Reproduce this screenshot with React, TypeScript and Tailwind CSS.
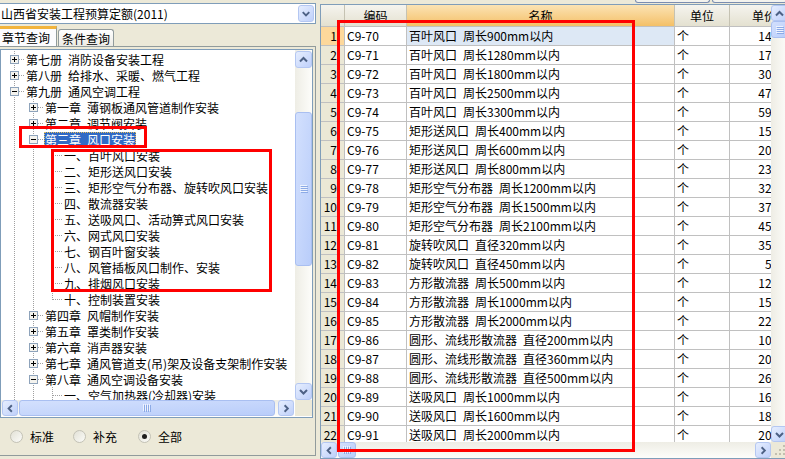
import React from "react";

type Dir = "up" | "down" | "left" | "right";

const arrowPaths: Record<Dir, string> = {
  up: "M4 9.5 L7.5 6 L11 9.5",
  down: "M4 6 L7.5 9.5 L11 6",
  left: "M9.5 4 L6 7.5 L9.5 11",
  right: "M6 4 L9.5 7.5 L6 11",
};

function ScrollBtn({ dir, className }: { dir: Dir; className: string }) {
  return (
    <div
      className={`${className} flex shrink-0 items-center justify-center rounded-[3px] border border-[#b4c7f2] bg-linear-to-br from-[#e6eefe] to-[#bfd0fa]`}
    >
      <svg width="15" height="15" viewBox="0 0 15 15">
        <path d={arrowPaths[dir]} fill="none" stroke="#4d6185" strokeWidth="2" />
      </svg>
    </div>
  );
}

function Thumb({ vertical, className }: { vertical?: boolean; className: string }) {
  return (
    <div
      className={`${className} flex shrink-0 items-center justify-center rounded-[3px] border border-[#a9bff1] bg-linear-to-br from-[#d3e0fd] to-[#b9cdfa]`}
    >
      {vertical ? (
        <svg width="8" height="8" viewBox="0 0 8 8">
          {[0, 2, 4, 6].map((y) => (
            <g key={y}>
              <line x1="0" y1={y + 0.5} x2="7" y2={y + 0.5} stroke="#eef3fe" />
              <line x1="1" y1={y + 1.5} x2="8" y2={y + 1.5} stroke="#8caae6" />
            </g>
          ))}
        </svg>
      ) : (
        <svg width="8" height="8" viewBox="0 0 8 8">
          {[0, 2, 4, 6].map((x) => (
            <g key={x}>
              <line x1={x + 0.5} y1="0" x2={x + 0.5} y2="7" stroke="#eef3fe" />
              <line x1={x + 1.5} y1="1" x2={x + 1.5} y2="8" stroke="#8caae6" />
            </g>
          ))}
        </svg>
      )}
    </div>
  );
}

type Cell = "pipe" | "tee" | "end";
type Node = { cells: Cell[]; box?: "plus" | "minus"; text: string; sel?: boolean };

function TreeCell({ kind, box }: { kind: Cell; box?: "plus" | "minus" }) {
  return (
    <svg width="19" height="16" viewBox="0 0 19 16" className="shrink-0">
      <line x1="9.5" y1="0" x2="9.5" y2={kind === "end" ? 9 : 16} stroke="#a0a0a0" strokeDasharray="1 1" />
      {kind !== "pipe" && <line x1="10" y1="8.5" x2="19" y2="8.5" stroke="#a0a0a0" strokeDasharray="1 1" />}
      {box && (
        <g>
          <rect x="5.5" y="4.5" width="8" height="8" fill="#f4f3ee" stroke="#8ea3bb" />
          <line x1="7" y1="8.5" x2="12" y2="8.5" stroke="#000" />
          {box === "plus" && <line x1="9.5" y1="6" x2="9.5" y2="11" stroke="#000" />}
        </g>
      )}
    </svg>
  );
}

function Label({ text }: { text: string }) {
  const parts = text.split(" ");
  return (
    <>
      {parts.map((p, i) => (
        <React.Fragment key={i}>
          {i > 0 && <span className="inline-block w-[6px]" />}
          {p}
        </React.Fragment>
      ))}
    </>
  );
}

const L0: Cell[] = ["tee"];
const L1: Cell[] = ["pipe", "tee"];
const L2: Cell[] = ["pipe", "pipe", "tee"];

const tree: Node[] = [
  { cells: L0, box: "plus", text: "第七册 消防设备安装工程" },
  { cells: L0, box: "plus", text: "第八册 给排水、采暖、燃气工程" },
  { cells: L0, box: "minus", text: "第九册 通风空调工程" },
  { cells: L1, box: "plus", text: "第一章 薄钢板通风管道制作安装" },
  { cells: L1, box: "plus", text: "第二章 调节阀安装" },
  { cells: L1, box: "minus", text: "第三章 风口安装", sel: true },
  { cells: L2, text: "一、百叶风口安装" },
  { cells: L2, text: "二、矩形送风口安装" },
  { cells: L2, text: "三、矩形空气分布器、旋转吹风口安装" },
  { cells: L2, text: "四、散流器安装" },
  { cells: L2, text: "五、送吸风口、活动箅式风口安装" },
  { cells: L2, text: "六、网式风口安装" },
  { cells: L2, text: "七、钢百叶窗安装" },
  { cells: L2, text: "八、风管插板风口制作、安装" },
  { cells: L2, text: "九、排烟风口安装" },
  { cells: ["pipe", "pipe", "end"], text: "十、控制装置安装" },
  { cells: L1, box: "plus", text: "第四章 风帽制作安装" },
  { cells: L1, box: "plus", text: "第五章 罩类制作安装" },
  { cells: L1, box: "plus", text: "第六章 消声器安装" },
  { cells: L1, box: "plus", text: "第七章 通风管道支(吊)架及设备支架制作安装" },
  { cells: L1, box: "minus", text: "第八章 通风空调设备安装" },
  { cells: L2, text: "一、空气加热器(冷却器)安装" },
];

const rows: [string, string, string][] = [
  ["C9-70", "百叶风口 周长900mm以内", "142.65"],
  ["C9-71", "百叶风口 周长1280mm以内", "176.30"],
  ["C9-72", "百叶风口 周长1800mm以内", "305.18"],
  ["C9-73", "百叶风口 周长2500mm以内", "471.92"],
  ["C9-74", "百叶风口 周长3300mm以内", "596.44"],
  ["C9-75", "矩形送风口 周长400mm以内", "154.27"],
  ["C9-76", "矩形送风口 周长600mm以内", "203.61"],
  ["C9-77", "矩形送风口 周长800mm以内", "236.85"],
  ["C9-78", "矩形空气分布器 周长1200mm以内", "325.47"],
  ["C9-79", "矩形空气分布器 周长1500mm以内", "378.06"],
  ["C9-80", "矩形空气分布器 周长2100mm以内", "452.73"],
  ["C9-81", "旋转吹风口 直径320mm以内", "356.12"],
  ["C9-82", "旋转吹风口 直径450mm以内", "58.49"],
  ["C9-83", "方形散流器 周长500mm以内", "125.36"],
  ["C9-84", "方形散流器 周长1000mm以内", "158.90"],
  ["C9-85", "方形散流器 周长2000mm以内", "224.18"],
  ["C9-86", "圆形、流线形散流器 直径200mm以内", "106.53"],
  ["C9-87", "圆形、流线形散流器 直径360mm以内", "207.84"],
  ["C9-88", "圆形、流线形散流器 直径500mm以内", "263.15"],
  ["C9-89", "送吸风口 周长1000mm以内", "164.28"],
  ["C9-90", "送吸风口 周长1600mm以内", "186.07"],
  ["C9-91", "送吸风口 周长2000mm以内", "201.95"],
];

function Radio({ on, label, className }: { on?: boolean; label: string; className: string }) {
  return (
    <div className={`flex items-center ${className}`}>
      <span className="flex h-[13px] w-[13px] items-center justify-center rounded-full border border-[#c3c2b6] bg-linear-to-br from-[#e2e1d6] to-[#fbfbf8]">
        {on && <span className="h-[5px] w-[5px] rounded-full bg-[#1e1e1e]" />}
      </span>
      <span className="ml-[7px]">{label}</span>
    </div>
  );
}

export default function App() {
  return (
    <div className="relative flex h-[459px] w-[785px] overflow-hidden bg-[#ece9d8] font-['Noto_Sans_CJK_SC',sans-serif] text-[12px] text-black">
      {/* left panel */}
      <div className="flex w-[316px] shrink-0 flex-col">
        <div className="mt-[3px] flex h-[21px] items-center border-y border-r border-[#7f9db9] bg-white pl-[1px] pr-[1px]">
          <span className="flex-1 whitespace-nowrap leading-[19px]">山西省安装工程预算定额(2011)</span>
          <ScrollBtn dir="down" className="h-[17px] w-[16px]" />
        </div>
        <div className="mt-[2px] flex h-[20px] items-end">
          <div className="flex h-[20px] w-[57px] items-center border-r border-t-[3px] border-[#919b9c] border-t-[#f2b43c] bg-[#fcfcfe] pl-[2px] leading-[16px]">
            章节查询
          </div>
          <div className="ml-[1px] flex h-[17px] w-[56px] items-center rounded-t-[3px] border-x border-t border-[#919b9c] bg-linear-to-b from-white to-[#ecebe5] pl-[3px] leading-[15px]">
            条件查询
          </div>
        </div>
        <div className="flex h-[410px] flex-col border-y border-r border-[#919b9c]">
          <div className="mr-[2px] mt-[2px] flex h-[369px] flex-col border border-[#7f9db9] bg-white">
            <div className="flex h-[350px]">
              <div className="w-[294px] overflow-hidden pt-[1px]">
                {tree.map((n, i) => (
                  <div key={i} className="flex h-4 items-center whitespace-nowrap pl-[4px]">
                    {n.cells.map((c, j) => (
                      <TreeCell key={j} kind={c} box={j === n.cells.length - 1 ? n.box : undefined} />
                    ))}
                    <span
                      className={`ml-[1px] h-[15px] border leading-[13px] ${
                        n.sel ? "border-dotted border-[#e9bf5a] bg-[#316ac5] text-white" : "border-transparent"
                      }`}
                    >
                      <Label text={n.text} />
                    </span>
                  </div>
                ))}
              </div>
              <div className="flex w-[17px] flex-col bg-linear-to-r from-[#eeede5] to-[#fdfdfa] pt-[1px]">
                <ScrollBtn dir="up" className="h-[17px] w-[17px]" />
                <div className="h-[44px]" />
                <Thumb vertical className="h-[154px] w-[17px]" />
                <div className="flex-1" />
                <ScrollBtn dir="down" className="h-[17px] w-[17px]" />
              </div>
            </div>
            <div className="flex h-[16px]">
              <div className="flex flex-1 bg-linear-to-b from-[#eeede5] to-[#fdfdfa] pl-[1px]">
                <ScrollBtn dir="left" className="h-[16px] w-[16px]" />
                <Thumb className="ml-[1px] h-[16px] w-[256px]" />
                <div className="flex-1" />
                <ScrollBtn dir="right" className="h-[16px] w-[16px]" />
              </div>
              <div className="ml-[1px] w-[17px] bg-[#ece9d8]" />
            </div>
          </div>
          <div className="flex h-[37px] items-center">
            <Radio label="标准" className="ml-[10px]" />
            <Radio label="补充" className="ml-[19px]" />
            <Radio on label="全部" className="ml-[21px]" />
          </div>
        </div>
      </div>

      <div className="w-[4px] shrink-0" />

      {/* right panel */}
      <div className="flex w-[470px] shrink-0 flex-col">
        <div className="flex h-[4px]">
          <div className="ml-[315px] h-[3px] w-[75px] rounded-b-[3px] border-x border-b border-[#7b8db0] bg-[#f3f3ee]" />
          <div className="ml-[2px] h-[3px] w-[75px] rounded-b-[3px] border-x border-b border-[#7b8db0] bg-[#f3f3ee]" />
        </div>
        <div className="flex h-[455px] flex-col border-l border-t border-b border-[#7f9db9] bg-white">
          <div className="flex h-[437px]">
            <div className="w-[450px] overflow-hidden">
              <div className="flex h-[22px] w-[480px] border-b border-[#c0c0c0] leading-[21px]">
                <div className="w-[24px] shrink-0 border-r border-[#c5c2b2] bg-linear-to-b from-[#f5f4ef] to-[#e4e1d0]" />
                <div className="w-[62px] shrink-0 border-r border-[#c5c2b2] bg-linear-to-b from-[#f5f4ef] to-[#e4e1d0] text-center">
                  编码
                </div>
                <div className="w-[268px] shrink-0 border-r border-[#c5c2b2] bg-linear-to-b from-[#fbe3b3] to-[#f4c066] text-center">
                  名称
                </div>
                <div className="w-[55px] shrink-0 border-r border-[#c5c2b2] bg-linear-to-b from-[#f5f4ef] to-[#e4e1d0] text-center">
                  单位
                </div>
                <div className="w-[68px] shrink-0 bg-linear-to-b from-[#f5f4ef] to-[#e4e1d0] text-center">单价</div>
              </div>
              {rows.map((r, i) => (
                <div key={i} className="flex h-[19px] w-[480px] border-b border-[#c0c0c0] leading-[18px]">
                  <div
                    className={`w-[24px] shrink-0 whitespace-nowrap border-r border-[#c0c0c0] pr-[7px] text-right ${
                      i === 0 ? "bg-[#fdd89b]" : "bg-[#ebe8d6]"
                    }`}
                  >
                    {i + 1}
                  </div>
                  <div className="w-[62px] shrink-0 border-r border-[#c0c0c0] pl-[2px]">{r[0]}</div>
                  <div
                    className={`w-[268px] shrink-0 whitespace-nowrap border-r border-[#c0c0c0] pl-[2px] ${
                      i === 0 ? "bg-[#dde8f5]" : ""
                    }`}
                  >
                    <Label text={r[1]} />
                  </div>
                  <div className="w-[55px] shrink-0 border-r border-[#c0c0c0] pl-[2px]">个</div>
                  <div className="w-[68px] shrink-0 pr-[3px] text-right">{r[2]}</div>
                </div>
              ))}
            </div>
            <div className="flex w-[17px] flex-col bg-linear-to-r from-[#eeede5] to-[#fdfdfa]">
              <ScrollBtn dir="up" className="h-[16px] w-[17px]" />
              <Thumb vertical className="h-[17px] w-[17px]" />
              <div className="flex-1" />
              <ScrollBtn dir="down" className="h-[16px] w-[17px]" />
            </div>
          </div>
          <div className="flex h-[16px]">
            <div className="flex w-[450px] bg-linear-to-b from-[#eeede5] to-[#fdfdfa]">
              <ScrollBtn dir="left" className="h-[16px] w-[16px]" />
              <Thumb className="ml-[1px] h-[16px] w-[18px]" />
              <div className="flex-1" />
              <ScrollBtn dir="right" className="h-[16px] w-[16px]" />
            </div>
            <div className="flex w-[17px] items-end justify-end bg-[#ece9d8] p-[2px]">
              <svg width="12" height="12" viewBox="0 0 12 12">
                {[
                  [9, 1],
                  [9, 5],
                  [5, 5],
                  [9, 9],
                  [5, 9],
                  [1, 9],
                ].map(([x, y], k) => (
                  <rect key={k} x={x} y={y} width="2" height="2" fill="#c2bfb0" />
                ))}
              </svg>
            </div>
          </div>
        </div>
      </div>

      {/* annotation boxes */}
      <div className="absolute left-[19px] top-[126px] h-[22px] w-[128px] border-[3px] border-[#ff0000]" />
      <div className="absolute left-[51px] top-[149px] h-[143px] w-[221px] border-[3px] border-[#ff0000]" />
      <div className="absolute left-[337px] top-[20px] h-[432px] w-[298px] border-[3px] border-[#ff0000]" />
    </div>
  );
}
